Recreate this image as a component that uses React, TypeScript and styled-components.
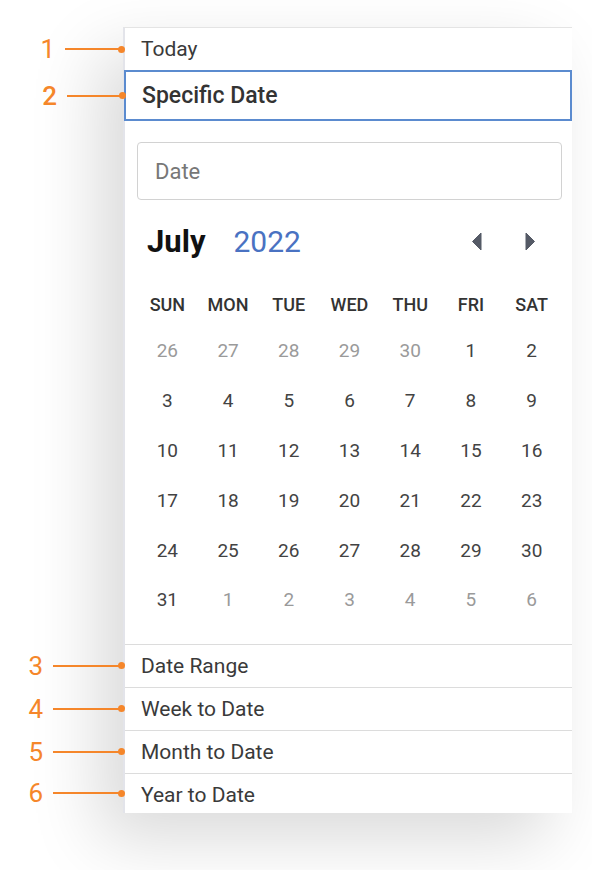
import React from "react";
import styled, { createGlobalStyle } from "styled-components";

const GlobalStyle = createGlobalStyle`
  html, body { margin: 0; padding: 0; background: #ffffff; }
  body { font-family: Roboto, "Liberation Sans", Arial, sans-serif; }
  * { box-sizing: border-box; }
`;

const Page = styled.div`
  width: 592px;
  height: 870px;
  padding: 27px 0 0 123px;
  overflow: hidden;
  background: #ffffff;
`;

const Panel = styled.div`
  width: 449px;
  background: #ffffff;
  border-top: 1px solid #e4e4e4;
  border-left: 2px solid #e3e4ea;
  box-shadow: -24px 26px 64px rgba(0, 0, 0, 0.15);
  display: flex;
  flex-direction: column;
`;

const OptionRow = styled.div<{ $divider?: boolean }>`
  position: relative;
  height: ${(p) => (p.$divider ? 43 : 42)}px;
  flex: none;
  display: flex;
  align-items: center;
  padding-left: 16px;
  font-size: 21px;
  color: #3a3a3a;
  border-top: ${(p) => (p.$divider ? "1.5px solid #dcdcdc" : "none")};
  &:last-child {
    height: 40px;
    padding-top: 3px;
  }
`;

const SelectedRow = styled.div`
  position: relative;
  height: 51px;
  flex: none;
  display: flex;
  align-items: center;
  padding-left: 16px;
  margin-left: -1px;
  border: 2.5px solid #5b8bcf;
  font-size: 23px;
  font-weight: 500;
  color: #333333;
`;

const Callout = styled.div`
  position: absolute;
  right: 100%;
  top: 0;
  bottom: 0;
  display: flex;
  align-items: center;
  pointer-events: none;
`;

const CalloutNumber = styled.span`
  font-size: 26px;
  color: #f5862a;
  line-height: 1;
  margin-right: 10px;
`;

const CalloutLine = styled.span<{ $len: number }>`
  width: ${(p) => p.$len}px;
  height: 2px;
  background: #f5862a;
  margin-right: -1px;
`;

const CalloutDot = styled.span`
  width: 7px;
  height: 7px;
  border-radius: 50%;
  background: #f5862a;
  flex: none;
`;

const CalendarBody = styled.div`
  padding: 21px 10px 19px 12px;
  display: flex;
  flex-direction: column;
`;

const DateInput = styled.div`
  height: 58px;
  border: 1.5px solid #d2d2d2;
  border-radius: 4px;
  display: flex;
  align-items: center;
  padding-left: 17px;
  font-size: 22px;
  color: #777777;
`;

const MonthHeader = styled.div`
  height: 82px;
  display: flex;
  align-items: center;
  padding-left: 10px;
`;

const MonthName = styled.span`
  font-size: 31px;
  font-weight: 700;
  color: #111111;
`;

const YearName = styled.span`
  font-size: 30px;
  color: #4a72c2;
  margin-left: 28px;
`;

const NavGroup = styled.div`
  margin-left: auto;
  margin-right: 26px;
  display: flex;
  align-items: center;
  gap: 42px;
`;

const NavButton = styled.span`
  display: flex;
  align-items: center;
  justify-content: center;
  width: 12px;
  height: 20px;
  color: #555a66;
`;

const Grid = styled.div`
  display: grid;
  grid-template-columns: repeat(7, 1fr);
`;

const WeekDay = styled.div`
  height: 44px;
  display: flex;
  align-items: center;
  justify-content: center;
  font-size: 18px;
  font-weight: 500;
  color: #333333;
`;

const Day = styled.div<{ $muted?: boolean }>`
  height: 49.8px;
  display: flex;
  align-items: center;
  justify-content: center;
  font-size: 19px;
  color: ${(p) => (p.$muted ? "#9a9a9a" : "#434343")};
`;

const ArrowLeft = () => (
  <svg width="11" height="19" viewBox="0 0 11 19">
    <path d="M10 1 L1.5 9.5 L10 18 Z" fill="currentColor" stroke="currentColor" strokeWidth="1" strokeLinejoin="round" />
  </svg>
);

const ArrowRight = () => (
  <svg width="11" height="19" viewBox="0 0 11 19">
    <path d="M1 1 L9.5 9.5 L1 18 Z" fill="currentColor" stroke="currentColor" strokeWidth="1" strokeLinejoin="round" />
  </svg>
);

const Mark = ({ n, len }: { n: number; len: number }) => (
  <Callout>
    <CalloutNumber>{n}</CalloutNumber>
    <CalloutLine $len={len} />
    <CalloutDot />
  </Callout>
);

const weekdays = ["SUN", "MON", "TUE", "WED", "THU", "FRI", "SAT"];

const days: { d: number; muted?: boolean }[] = [
  ...[26, 27, 28, 29, 30].map((d) => ({ d, muted: true })),
  ...Array.from({ length: 31 }, (_, i) => ({ d: i + 1 })),
  ...[1, 2, 3, 4, 5, 6].map((d) => ({ d, muted: true })),
];

const bottomOptions = ["Date Range", "Week to Date", "Month to Date", "Year to Date"];

export default function App() {
  return (
    <>
      <GlobalStyle />
      <Page>
        <Panel>
          <OptionRow>
            Today
            <Mark n={1} len={54} />
          </OptionRow>
          <SelectedRow>
            Specific Date
            <Mark n={2} len={53} />
          </SelectedRow>
          <CalendarBody>
            <DateInput>Date</DateInput>
            <MonthHeader>
              <MonthName>July</MonthName>
              <YearName>2022</YearName>
              <NavGroup>
                <NavButton>
                  <ArrowLeft />
                </NavButton>
                <NavButton>
                  <ArrowRight />
                </NavButton>
              </NavGroup>
            </MonthHeader>
            <Grid>
              {weekdays.map((w) => (
                <WeekDay key={w}>{w}</WeekDay>
              ))}
              {days.map((item, i) => (
                <Day key={i} $muted={item.muted}>
                  {item.d}
                </Day>
              ))}
            </Grid>
          </CalendarBody>
          {bottomOptions.map((label, i) => (
            <OptionRow key={label} $divider>
              {label}
              <Mark n={i + 3} len={66} />
            </OptionRow>
          ))}
        </Panel>
      </Page>
    </>
  );
}
